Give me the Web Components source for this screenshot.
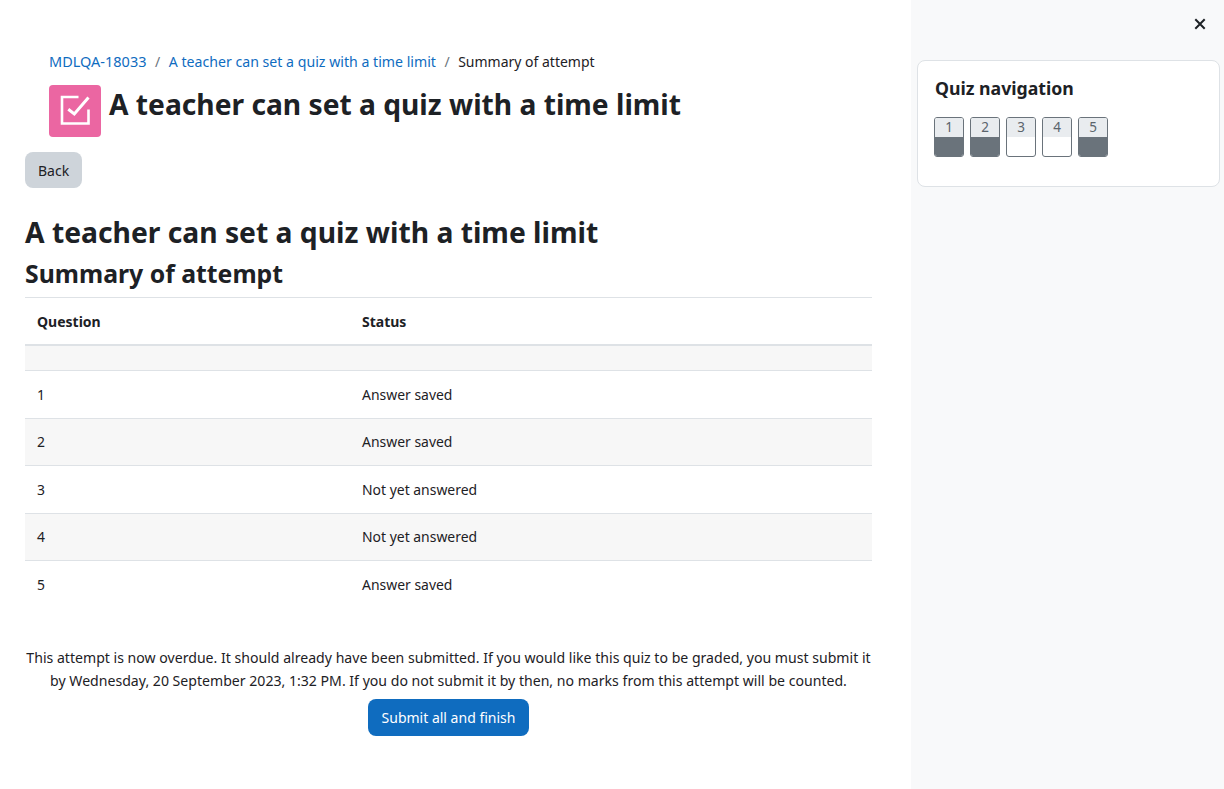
<!DOCTYPE html>
<html><head><meta charset="utf-8"><title>Summary of attempt</title>
<style>
html,body{margin:0;padding:0;height:100%;background:#fff}
body{font:14px/1.5 "Noto Sans",sans-serif;color:#1d2125}
</style></head><body>
<template id="t-page"><style>
:host{display:grid;grid-template-columns:911px 313px;height:789px;overflow:hidden}
main{padding:51px 39px 0 25px;min-width:0}
aside{background:#f8f9fa;padding:0 4px 0 6px}
</style><main><slot></slot></main><aside><slot name="side"></slot></aside></template>
<template id="t-crumbs"><style>
:host{display:flex;padding-left:24px;height:22px;align-items:baseline;font-size:14px;line-height:21px;white-space:nowrap}
::slotted(a){color:#0f6cbf;text-decoration:none;font-size:14.15px}
::slotted(a.first){font-size:14.5px}
::slotted(i){font-style:normal;color:#6a737b;padding:0 8.5px}
</style><slot></slot></template>
<template id="t-head"><style>
:host{display:flex;padding-left:24px;margin-top:12px;height:52px;gap:8px}
.ic{width:52px;height:52px;background:#eb66a2;border-radius:4px;flex:none}
svg{display:block}
h1{margin:0;font-size:28.2px;line-height:38px;font-weight:700;white-space:nowrap}
</style><div class="ic"><svg width="52" height="52" viewBox="0 0 52 52" fill="none" stroke="#fff" stroke-width="2.6"><path d="M29.5 12H13V38.5H39.5V24.5"/><path d="M19.3 24.3L25.3 29L39.5 12.5" stroke-width="3"/></svg></div><h1><slot></slot></h1></template>
<template id="t-btn"><style>
:host{display:inline-block;border-radius:8px;font-size:14px;line-height:21px;padding:8px 13px;white-space:nowrap;background:var(--bg,#ced4da);color:var(--fg,#1d2125)}
</style><slot></slot></template>
<template id="t-table"><style>
:host{display:block;border-top:1px solid #dee2e6;font-size:14px}
.r{display:grid;grid-template-columns:325px 1fr;padding:0 12px;align-items:center;border-bottom:1px solid #dee2e6}
.h{font-weight:700;border-bottom:2px solid #dee2e6;padding-top:1px;height:45px}
.e{height:24px;background:#f7f7f7}
</style><div class="r h"><span>Question</span><span>Status</span></div><div class="r e"></div><slot></slot></template>
<template id="t-row"><style>
:host{display:grid;grid-template-columns:325px 1fr;padding:2px 12px 0;align-items:center;height:44.5px;border-bottom:1px solid #dee2e6;font-size:13.95px}
:host([odd]){background:#f7f7f7}
:host([last]){border-bottom:0}
</style><span><slot name="n"></slot></span><span><slot></slot></span></template>
<template id="t-card"><style>
:host{display:block;background:#fff;border:1px solid #dee2e6;border-radius:8px;padding:15px 16px 16px;height:127px;box-sizing:border-box;margin-top:60px}
h4{margin:0 0 17px;padding-left:1px;font:700 17.7px/24px "Noto Sans",sans-serif;color:#1d2125}
.w{display:flex;gap:6px}
</style><h4>Quiz navigation</h4><div class="w"><slot></slot></div></template>
<template id="t-q"><style>
:host{display:block;width:30px;height:40px;box-sizing:border-box;border:1px solid #6a737b;border-radius:3px;overflow:hidden;background:#fff;font-size:13.5px;line-height:19px;text-align:center;color:#5b646c}
.t{height:19px;background:#e9ecef}
.b{height:19px}
:host([done]) .b{background:#6a737b}
</style><div class="t"><slot></slot></div><div class="b"></div></template>
<template id="t-close"><style>
:host{display:block;position:absolute;top:17px;right:17px;width:14px;height:14px}
svg{display:block}
</style><svg width="14" height="14" viewBox="0 0 14 14" stroke="#1d2125" stroke-width="2"><path d="M2.3 2.3L11.7 11.7M11.7 2.3L2.3 11.7"/></svg></template>
<template id="t-foot"><style>
:host{display:block;text-align:center;margin-top:38px;line-height:23px;font-size:14.1px}
p{margin:0}
.b{margin-top:7px;display:flex;justify-content:center}
</style><p><slot></slot></p><div class="b"><slot name="btn"></slot></div></template>

<q-page>
  <q-crumbs><a class="first">MDLQA-18033</a><i>/</i><a>A teacher can set a quiz with a time limit</a><i>/</i><span>Summary of attempt</span></q-crumbs>
  <q-head>A teacher can set a quiz with a time limit</q-head>
  <div style="margin-top:15px;height:36px;line-height:0"><q-btn style="line-height:20px;padding-top:9px;padding-bottom:7px">Back</q-btn></div>
  <div style="font:700 28.25px/38px 'Noto Sans',sans-serif;margin-top:25px">A teacher can set a quiz with a time limit</div>
  <div style="font:700 24.8px/32px 'Noto Sans',sans-serif;margin-top:6px;margin-bottom:8px">Summary of attempt</div>
  <q-table>
    <q-row><span slot="n">1</span>Answer saved</q-row>
    <q-row odd><span slot="n">2</span>Answer saved</q-row>
    <q-row><span slot="n">3</span>Not yet answered</q-row>
    <q-row odd><span slot="n">4</span>Not yet answered</q-row>
    <q-row last><span slot="n">5</span>Answer saved</q-row>
  </q-table>
  <q-foot>This attempt is now overdue. It should already have been submitted. If you would like this quiz to be graded, you must submit it by Wednesday, 20 September 2023, 1:32 PM. If you do not submit it by then, no marks from this attempt will be counted.<q-btn slot="btn" style="--bg:#0f6cbf;--fg:#fff;padding-left:13.5px;padding-right:13.5px">Submit all and finish</q-btn></q-foot>
  <q-close slot="side"></q-close>
  <q-card slot="side"><q-q done>1</q-q><q-q done>2</q-q><q-q>3</q-q><q-q>4</q-q><q-q done>5</q-q></q-card>
</q-page>
<script>
for(const [tag,id] of [['q-page','t-page'],['q-crumbs','t-crumbs'],['q-head','t-head'],['q-btn','t-btn'],['q-table','t-table'],['q-row','t-row'],['q-card','t-card'],['q-q','t-q'],['q-close','t-close'],['q-foot','t-foot']]){
  customElements.define(tag,class extends HTMLElement{constructor(){super();this.attachShadow({mode:'open'}).appendChild(document.getElementById(id).content.cloneNode(true));}});
}
</script>
</body></html>
